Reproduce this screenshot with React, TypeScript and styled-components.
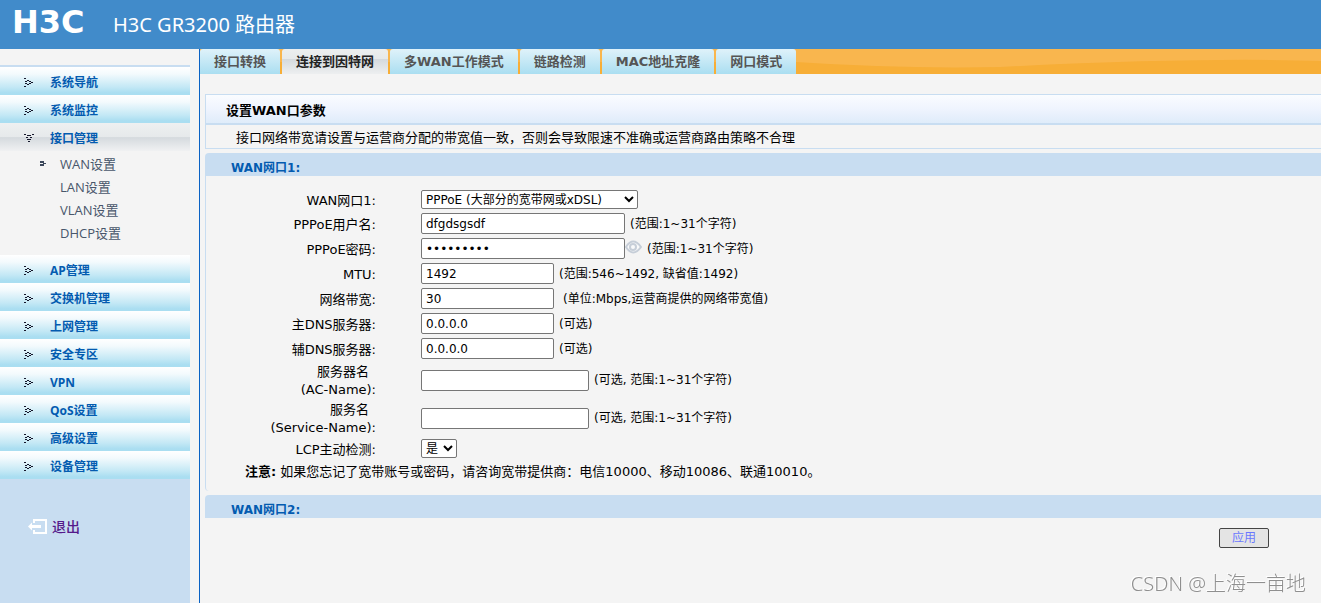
import React from "react";
import styled, { createGlobalStyle } from "styled-components";

const wide = `"DejaVu Sans", "Noto Sans CJK SC", sans-serif`;
const narrow = `"Open Sans", "Noto Sans CJK SC", sans-serif`;

const GlobalStyle = createGlobalStyle`
  *, *::before, *::after { box-sizing: border-box; }
  body { margin: 0; background: #f4f4f4; color: #000; font-family: ${wide}; font-size: 13px; }
  a { text-decoration: none; }
  button, input, select { font-family: inherit; }
`;

const Page = styled.div`
  min-height: 100vh;
  display: flex;
  flex-direction: column;
`;

const Header = styled.header`
  height: 49px;
  display: flex;
  align-items: center;
  gap: 24px;
  padding: 0 12px;
  background: #418bca;
  color: #fff;
`;

const Logo = styled.span`
  width: 77px;
  font-size: 32px;
  font-weight: 700;
  line-height: 32px;
  padding-bottom: 6px;
`;

const Title = styled.h1`
  margin: 0;
  font: 400 20px/30px "Noto Sans", "Noto Sans CJK SC", sans-serif;
`;

const Body = styled.div`
  flex: 1;
  display: flex;
`;

const Sidebar = styled.aside`
  width: 190px;
  flex: none;
  display: flex;
  flex-direction: column;
  padding-top: 16px;
  font-family: ${narrow};
`;

const Menu = styled.nav`
  border-top: 2px solid #c8ddf1;
`;

const MenuItem = styled.a<{ $open?: boolean }>`
  height: 28px;
  display: flex;
  align-items: center;
  gap: 13px;
  padding-left: 22px;
  padding-top: 4px;
  font-size: 12px;
  line-height: 18px;
  font-weight: 700;
  color: #035bb0;
  background: ${(p) =>
    p.$open
      ? "linear-gradient(#eef0f1 0, #e6e9eb 50%, #d5dade 52%, #f0f1f2 100%)"
      : "linear-gradient(#fff 0, #f3fafd 25%, #c3e8f5 72%, #aadef1 92%, #aadef1 100%)"};
`;

const SubMenu = styled.div`
  padding: 1px 0 11px;
`;

const SubItem = styled.a`
  height: 23px;
  display: flex;
  align-items: center;
  gap: 9px;
  padding-left: 36px;
  font-size: 13px;
  line-height: 18px;
  color: #48566b;
`;

const SidebarFoot = styled.div`
  flex: 1;
  background: #c8ddf1;
  padding: 38px 28px;
`;

const Logout = styled.a`
  display: inline-flex;
  align-items: center;
  gap: 5px;
  font-size: 14px;
  line-height: 20px;
  font-weight: 500;
  color: #551a8b;
`;

const Main = styled.main`
  flex: 1;
  min-width: 0;
  margin-left: 9px;
  border-left: 1px solid #0a62c4;
`;

const Tabs = styled.nav`
  position: relative;
  height: 25px;
  display: flex;
  gap: 2px;
  background: #f7ae37;
`;

const Wave = styled.svg`
  position: absolute;
  inset: 0;
  width: 100%;
  height: 100%;
`;

const Tab = styled.a<{ $active?: boolean }>`
  position: relative;
  display: flex;
  justify-content: center;
  padding: 0 14px;
  font-size: 13px;
  line-height: 25px;
  font-weight: 700;
  white-space: nowrap;
  border-radius: 3px 3px 0 0;
  color: ${(p) => (p.$active ? "#222" : "#555")};
  background: ${(p) =>
    p.$active
      ? "linear-gradient(#eceeef 0, #e6e9eb 40%, #d5dade 42%, #edeff0 100%)"
      : "linear-gradient(#dff2fa, #aadef1)"};
`;

const Content = styled.div`
  padding: 20px 0 0 5px;
`;

const Panel = styled.section`
  border: 1px solid #c8ddf1;
  border-right: 0;
  margin-bottom: 4px;
`;

const PanelTitle = styled.h2`
  margin: 0;
  height: 30px;
  padding: 2px 0 0 20px;
  border-bottom: 2px solid #c8ddf1;
  background: linear-gradient(#fafcff, #eff4fe 50%, #dfecfa);
  font-size: 13px;
  line-height: 28px;
`;

const PanelText = styled.p`
  margin: 0;
  padding: 2px 0 0 30px;
  font-size: 13px;
  line-height: 21px;
`;

const SectionTitle = styled.h3`
  margin: 0;
  padding: 7px 0 0 26px;
  border-radius: 4px 0 0 0;
  background: #c8ddf1;
  color: #035bb0;
  font-size: 12px;
  line-height: 16px;
`;

const Form = styled.form`
  margin-bottom: 4px;
  padding: 12px 0 8px;
  border-left: 1px solid #c8ddf1;
  border-radius: 0 0 0 4px;
`;

const Row = styled.div<{ $size?: "short" | "tall" }>`
  min-height: ${(p) => (p.$size === "short" ? 23 : p.$size === "tall" ? 38 : 25)}px;
  display: grid;
  grid-template-columns: 170px 1fr;
  column-gap: 45px;
  align-items: center;
`;

const Label = styled.label`
  padding-top: 2px;
  text-align: right;
  font-size: 13px;
  line-height: 18px;
`;

const LabelTop = styled.span`
  display: block;
  padding-right: 7px;
`;

const Field = styled.div`
  display: flex;
  align-items: center;
  font-size: 12px;
`;

const Input = styled.input<{ $width: number }>`
  width: ${(p) => p.$width}px;
  height: 21px;
  padding: 1px 4px;
  border: 1px solid #767676;
  border-radius: 2px;
  background: #fff;
  font-size: 12px;
`;

const Select = styled.select<{ $width: number }>`
  width: ${(p) => p.$width}px;
  height: 19px;
  padding: 0;
  border: 1px solid #767676;
  border-radius: 2px;
  background: #fff;
  color: #000;
  font-size: 12px;
`;

const Hint = styled.span<{ $far?: boolean }>`
  margin-left: ${(p) => (p.$far ? 9 : 5)}px;
  line-height: 18px;
`;

const EyeButton = styled.button`
  width: 17px;
  height: 18px;
  display: flex;
  padding: 0;
  border: 0;
  background: none;
`;

const Note = styled.p`
  margin: 0;
  padding-left: 39px;
  font-size: 13px;
  line-height: 23px;
`;

const Actions = styled.div`
  display: flex;
  justify-content: flex-end;
  padding: 10px 52px 0 0;
`;

const ApplyButton = styled.button`
  width: 50px;
  height: 20px;
  padding: 0;
  border: 1px solid #444;
  border-radius: 2px;
  background: #e4e4e4;
  color: #6b78ff;
  font-size: 12px;
  line-height: 18px;
`;

const Watermark = styled.div`
  position: fixed;
  right: 15px;
  bottom: 4px;
  color: #8f8f8f;
  font: 300 20px/30px "Noto Sans", "Noto Sans CJK SC", sans-serif;
  text-shadow: -1px -1px 0 #fff;
`;

const dots = [[0, 0], [3, 2], [1, 3], [5, 3], [7, 4], [1, 5], [5, 5], [3, 6], [0, 8]];

const ArrowIcon = ({ open }: { open?: boolean }) => (
  <svg width="15" height="15" viewBox="0 0 15 15" fill="#15172b" aria-hidden="true">
    {dots.map(([x, y]) => (
      <rect key={`${x}-${y}`} x={open ? y + 2 : x + 2} y={open ? x + 2 : y + 2} width="2" height="1" />
    ))}
  </svg>
);

const SubArrow = ({ shown }: { shown: boolean }) => (
  <svg width="15" height="11" viewBox="0 0 15 11" fill="#3c485c" aria-hidden="true">
    {shown && <path d="M4 3h4v2H4zM7 5h3v1H7zM4 6h4v2H4z" />}
  </svg>
);

const menu = [
  "系统导航", "系统监控", "接口管理", "AP管理", "交换机管理", "上网管理",
  "安全专区", "VPN", "QoS设置", "高级设置", "设备管理",
];
const subMenu = ["WAN设置", "LAN设置", "VLAN设置", "DHCP设置"];
const tabs = ["接口转换", "连接到因特网", "多WAN工作模式", "链路检测", "MAC地址克隆", "网口模式"];

export default function App() {
  return (
    <Page>
      <GlobalStyle />
      <Header>
        <Logo>H3C</Logo>
        <Title>H3C GR3200 路由器</Title>
      </Header>
      <Body>
        <Sidebar>
          <Menu>
            {menu.map((name) => {
              const open = name === "接口管理";
              return (
                <React.Fragment key={name}>
                  <MenuItem href="#" $open={open}>
                    <ArrowIcon open={open} />
                    {name}
                  </MenuItem>
                  {open && (
                    <SubMenu>
                      {subMenu.map((sub, i) => (
                        <SubItem href="#" key={sub}>
                          <SubArrow shown={i === 0} />
                          {sub}
                        </SubItem>
                      ))}
                    </SubMenu>
                  )}
                </React.Fragment>
              );
            })}
          </Menu>
          <SidebarFoot>
            <Logout href="#">
              <svg width="19" height="16" viewBox="0 0 19 16" fill="none" stroke="#fff" strokeWidth="2" aria-hidden="true">
                <path d="M6 4V1h12v13H6v-3" />
                <path d="M3 7.5h10" strokeWidth="3" />
                <path d="M0 7.5l4-4v8z" fill="#fff" stroke="none" />
              </svg>
              退出
            </Logout>
          </SidebarFoot>
        </Sidebar>
        <Main>
          <Tabs>
            <Wave viewBox="0 0 1121 25" preserveAspectRatio="none" aria-hidden="true">
              <path d="M0 0h1121v12Q1000 8 800 18Q700 20 596 13H0z" fill="#f9b64e" />
            </Wave>
            {tabs.map((tab) => (
              <Tab href="#" key={tab} $active={tab === "连接到因特网"}>{tab}</Tab>
            ))}
          </Tabs>
          <Content>
            <Panel>
              <PanelTitle>设置WAN口参数</PanelTitle>
              <PanelText>接口网络带宽请设置与运营商分配的带宽值一致，否则会导致限速不准确或运营商路由策略不合理</PanelText>
            </Panel>
            <SectionTitle>WAN网口1:</SectionTitle>
            <Form onSubmit={(e) => e.preventDefault()}>
              <Row $size="short">
                <Label htmlFor="mode">WAN网口1:</Label>
                <Field>
                  <Select id="mode" $width={217}>
                    <option>PPPoE (大部分的宽带网或xDSL)</option>
                  </Select>
                </Field>
              </Row>
              <Row>
                <Label htmlFor="user">PPPoE用户名:</Label>
                <Field>
                  <Input id="user" $width={204} defaultValue="dfgdsgsdf" />
                  <Hint>(范围:1~31个字符)</Hint>
                </Field>
              </Row>
              <Row>
                <Label htmlFor="password">PPPoE密码:</Label>
                <Field>
                  <Input id="password" type="password" $width={204} defaultValue="dfgdsgsdf" />
                  <EyeButton type="button" aria-label="显示密码">
                    <svg width="17" height="14" viewBox="0 0 17 14" fill="none" stroke="#c6ced8" strokeWidth="2" aria-hidden="true">
                      <path d="M1 7Q8 -4 16 7Q8 18 1 7z" fill="#f8f9fa" />
                      <circle cx="8" cy="7" r="3" />
                    </svg>
                  </EyeButton>
                  <Hint>(范围:1~31个字符)</Hint>
                </Field>
              </Row>
              <Row>
                <Label htmlFor="mtu">MTU:</Label>
                <Field>
                  <Input id="mtu" $width={133} defaultValue="1492" />
                  <Hint>(范围:546~1492, 缺省值:1492)</Hint>
                </Field>
              </Row>
              <Row>
                <Label htmlFor="bandwidth">网络带宽:</Label>
                <Field>
                  <Input id="bandwidth" $width={133} defaultValue="30" />
                  <Hint $far>(单位:Mbps,运营商提供的网络带宽值)</Hint>
                </Field>
              </Row>
              <Row>
                <Label htmlFor="dns1">主DNS服务器:</Label>
                <Field>
                  <Input id="dns1" $width={133} defaultValue="0.0.0.0" />
                  <Hint>(可选)</Hint>
                </Field>
              </Row>
              <Row>
                <Label htmlFor="dns2">辅DNS服务器:</Label>
                <Field>
                  <Input id="dns2" $width={133} defaultValue="0.0.0.0" />
                  <Hint>(可选)</Hint>
                </Field>
              </Row>
              <Row $size="tall">
                <Label htmlFor="acname"><LabelTop>服务器名</LabelTop>(AC-Name):</Label>
                <Field>
                  <Input id="acname" $width={168} />
                  <Hint>(可选, 范围:1~31个字符)</Hint>
                </Field>
              </Row>
              <Row $size="tall">
                <Label htmlFor="service"><LabelTop>服务名</LabelTop>(Service-Name):</Label>
                <Field>
                  <Input id="service" $width={168} />
                  <Hint>(可选, 范围:1~31个字符)</Hint>
                </Field>
              </Row>
              <Row $size="short">
                <Label htmlFor="lcp">LCP主动检测:</Label>
                <Field>
                  <Select id="lcp" $width={36}>
                    <option>是</option>
                  </Select>
                </Field>
              </Row>
              <Note><b>注意:</b> 如果您忘记了宽带账号或密码，请咨询宽带提供商：电信10000、移动10086、联通10010。</Note>
            </Form>
            <SectionTitle>WAN网口2:</SectionTitle>
            <Actions>
              <ApplyButton type="button">应用</ApplyButton>
            </Actions>
          </Content>
        </Main>
      </Body>
      <Watermark>CSDN @上海一亩地</Watermark>
    </Page>
  );
}
